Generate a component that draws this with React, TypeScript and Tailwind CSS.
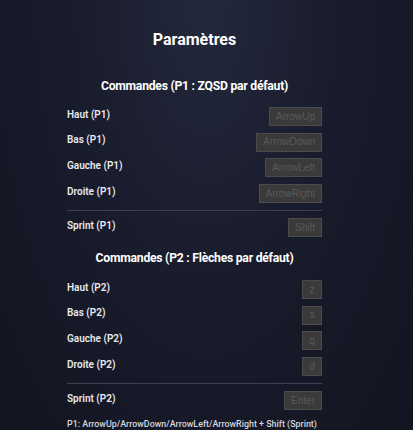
import React from "react";

const Key = ({ label }: { label: string }) => (
  <div className="h-[19px] px-[6px] min-w-[20px] flex items-center justify-center bg-[#3a3a3a] border border-[#4b4b4b] text-[#595959] text-[10px] leading-none [font-family:'Liberation_Sans',Arial,sans-serif]">
    {label}
  </div>
);

const Row = ({ label, k }: { label: string; k: string }) => (
  <div className="flex items-center justify-between h-[19px]">
    <span className="text-[10px] font-semibold text-[#e8e9ee] leading-none -mt-[4px]">{label}</span>
    <Key label={k} />
  </div>
);

export default function App() {
  return (
    <div className="w-[413px] h-[430px] overflow-hidden bg-[radial-gradient(ellipse_at_50%_0%,#23283c_0%,#191c2c_45%,#121420_100%)] [font-family:Roboto,'Noto_Sans',sans-serif]">
      <div className="w-[389px] pt-[30px]">
        <div className="mx-auto w-[255px] flex flex-col">
          <h1 className="text-center text-[16px] leading-[20px] font-bold text-white">Paramètres</h1>
          <h2 className="mt-[28px] text-center text-[12.2px] leading-[16px] font-bold text-white tracking-[-0.25px]">
            Commandes (P1 : ZQSD par défaut)
          </h2>
          <div className="mt-[13px] flex flex-col gap-[6.7px]">
            <Row label="Haut (P1)" k="ArrowUp" />
            <Row label="Bas (P1)" k="ArrowDown" />
            <Row label="Gauche (P1)" k="ArrowLeft" />
            <Row label="Droite (P1)" k="ArrowRight" />
          </div>
          <div className="mt-[7px] h-px bg-[#3c4052]" />
          <div className="mt-[7px]">
            <Row label="Sprint (P1)" k="Shift" />
          </div>
          <h2 className="mt-[13px] text-center text-[12.2px] leading-[16px] font-bold text-white tracking-[-0.25px]">
            Commandes (P2 : Flèches par défaut)
          </h2>
          <div className="mt-[14px] flex flex-col gap-[6.7px]">
            <Row label="Haut (P2)" k="z" />
            <Row label="Bas (P2)" k="s" />
            <Row label="Gauche (P2)" k="q" />
            <Row label="Droite (P2)" k="d" />
          </div>
          <div className="mt-[7px] h-px bg-[#3c4052]" />
          <div className="mt-[7px]">
            <Row label="Sprint (P2)" k="Enter" />
          </div>
          <p className="mt-[7px] text-[8.9px] leading-[14px] text-[#d4d6de] whitespace-nowrap font-medium">
            P1: ArrowUp/ArrowDown/ArrowLeft/ArrowRight + Shift (Sprint)
          </p>
        </div>
      </div>
    </div>
  );
}
